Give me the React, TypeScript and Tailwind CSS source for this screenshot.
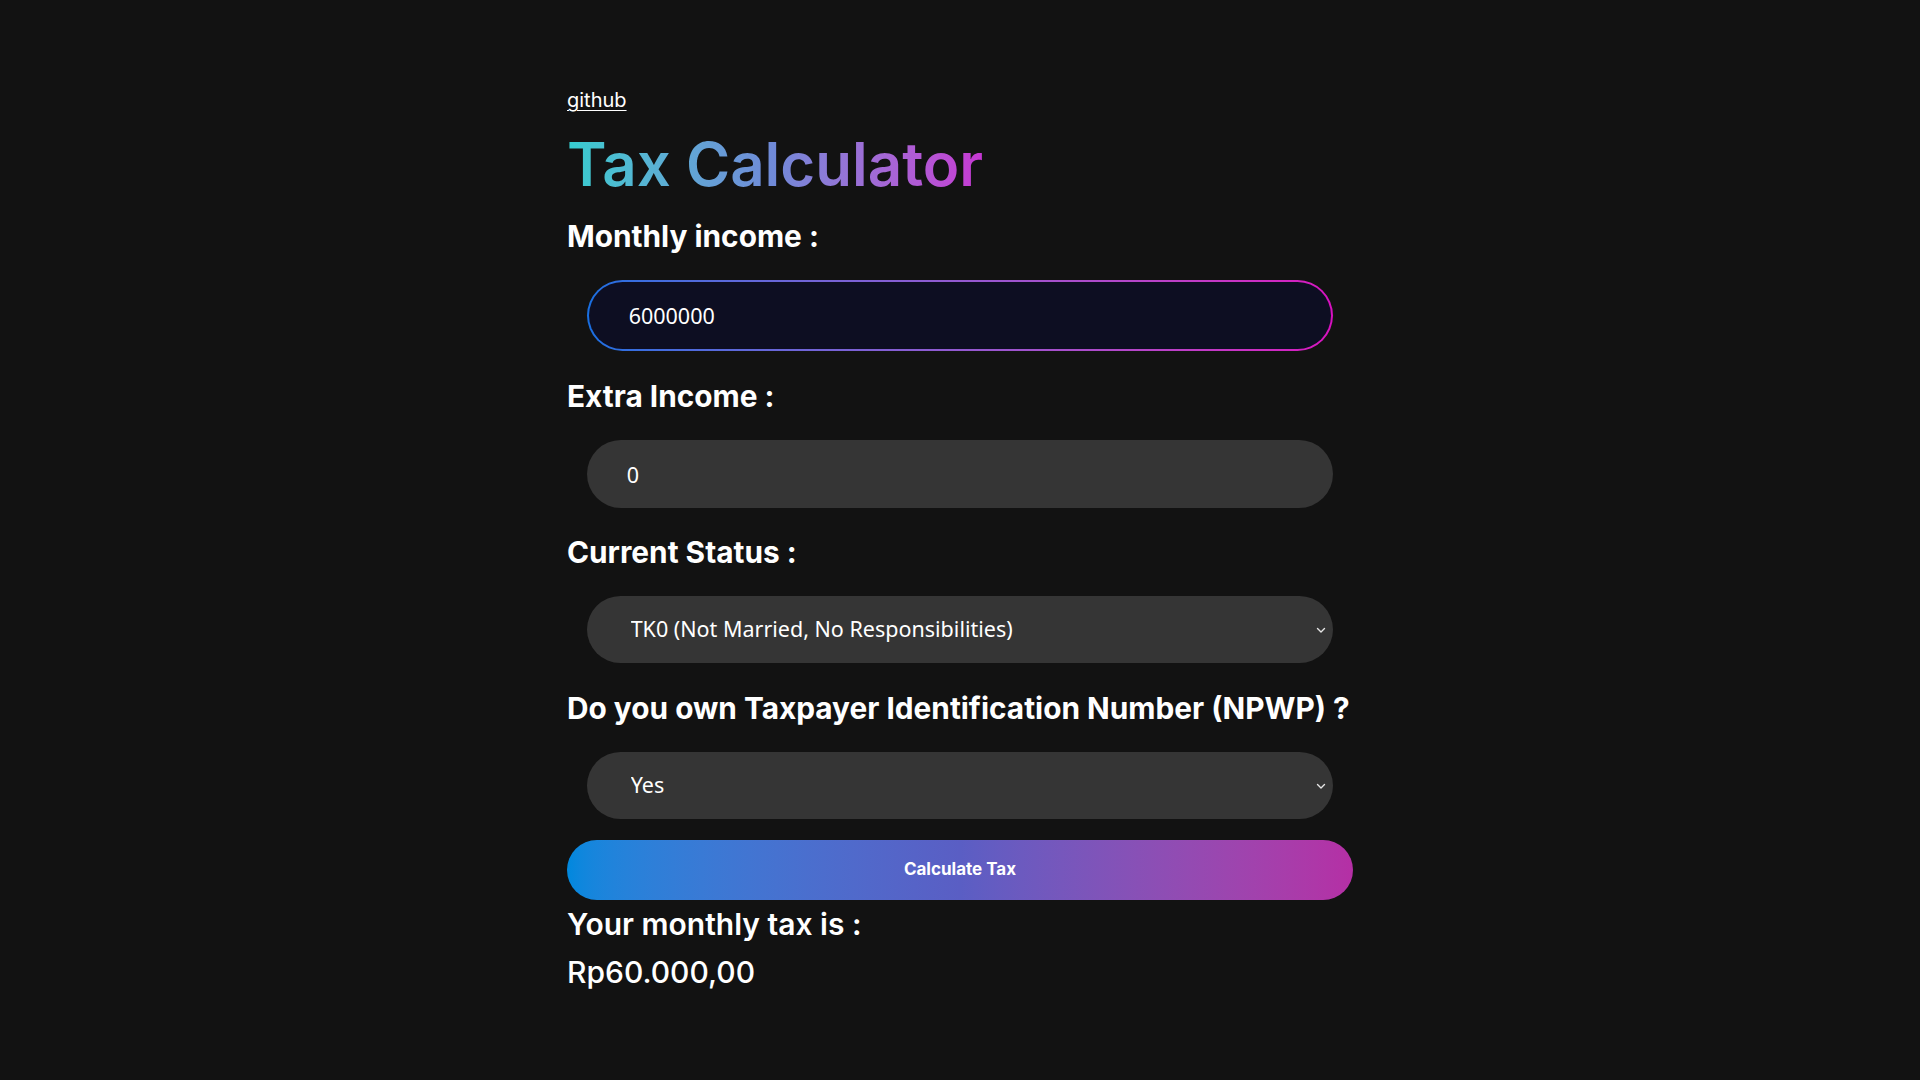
import React, { useState } from 'react';

const Chevron = () => (
  <svg
    className="pointer-events-none absolute right-[6px] top-1/2 -translate-y-1/2"
    width="12"
    height="12"
    viewBox="0 0 12 12"
    fill="none"
  >
    <path d="M2.5 4.5 6 8l3.5-3.5" stroke="#e5e5e5" strokeWidth="1.4" strokeLinecap="round" strokeLinejoin="round" />
  </svg>
);

const Label = ({ children }: { children: React.ReactNode }) => (
  <h3 className="whitespace-nowrap text-[29.8px] leading-[36px] font-bold text-white">{children}</h3>
);

const App = () => {
  const [income, setIncome] = useState('6000000');
  const [extra, setExtra] = useState('0');
  const [status, setStatus] = useState('TK0');
  const [npwp, setNpwp] = useState('yes');

  return (
    <div className="min-h-screen w-full bg-[#121212] text-white font-['Inter',sans-serif]">
      <div className="mx-auto w-[786px] pt-[89px] pb-20">
        {/* header */}
        <a href="#" className="block w-fit text-[20px] leading-[22px] text-white underline underline-offset-[3px] decoration-1">
          github
        </a>
        <h1 className="mt-[16px] inline-block bg-linear-to-r from-[#34cdcf] via-[#7089d8] to-[#c636d3] bg-clip-text text-[60px] leading-[75px] font-semibold text-transparent">
          Tax Calculator
        </h1>

        {/* form */}
        <div className="mt-[16px] flex flex-col">
          <Label>Monthly income :</Label>
          <div className="mx-auto mt-[26px] w-[95%] rounded-full bg-linear-to-r from-[#176fe1] to-[#d80fc0] p-[2px]">
            <input
              value={income}
              onChange={(e) => setIncome(e.target.value)}
              className="h-[67px] w-full rounded-full bg-[#0d0e22] pl-[40px] text-[21.5px] text-white outline-none font-['Noto_Sans',sans-serif]"
            />
          </div>

          <div className="mt-[27px]">
            <Label>Extra Income :</Label>
          </div>
          <input
            value={extra}
            onChange={(e) => setExtra(e.target.value)}
            className="mx-auto mt-[26px] h-[68px] w-[95%] rounded-full bg-[#353535] pl-[40px] text-[21.5px] text-white outline-none font-['Noto_Sans',sans-serif]"
          />

          <div className="mt-[26px]">
            <Label>Current Status :</Label>
          </div>
          <div className="relative mx-auto mt-[26px] w-[95%]">
            <select
              value={status}
              onChange={(e) => setStatus(e.target.value)}
              className="h-[67px] w-full appearance-none rounded-full bg-[#353535] pl-[44px] text-[21.5px] text-white outline-none font-['Noto_Sans',sans-serif]"
            >
              <option value="TK0">TK0 (Not Married, No Responsibilities)</option>
              <option value="TK1">TK1 (Not Married, 1 Responsibility)</option>
              <option value="K0">K0 (Married, No Responsibilities)</option>
            </select>
            <Chevron />
          </div>

          <div className="mt-[27px]">
            <Label>Do you own Taxpayer Identification Number (NPWP) ?</Label>
          </div>
          <div className="relative mx-auto mt-[26px] w-[95%]">
            <select
              value={npwp}
              onChange={(e) => setNpwp(e.target.value)}
              className="h-[67px] w-full appearance-none rounded-full bg-[#353535] pl-[44px] text-[21.5px] text-white outline-none font-['Noto_Sans',sans-serif]"
            >
              <option value="yes">Yes</option>
              <option value="no">No</option>
            </select>
            <Chevron />
          </div>

          <button className="mt-[21px] h-[60px] w-full rounded-full bg-linear-to-r from-[#0088de] via-[#5a5ec4] to-[#b52fa5] text-[17px] font-bold text-white">
            Calculate Tax
          </button>

          {/* result */}
          <p className="mt-[6px] text-[30px] leading-[36px] font-semibold text-white">Your monthly tax is :</p>
          <p className="mt-[12px] text-[30px] leading-[36px] font-medium text-white">Rp60.000,00</p>
        </div>
      </div>
    </div>
  );
};

export default App;
